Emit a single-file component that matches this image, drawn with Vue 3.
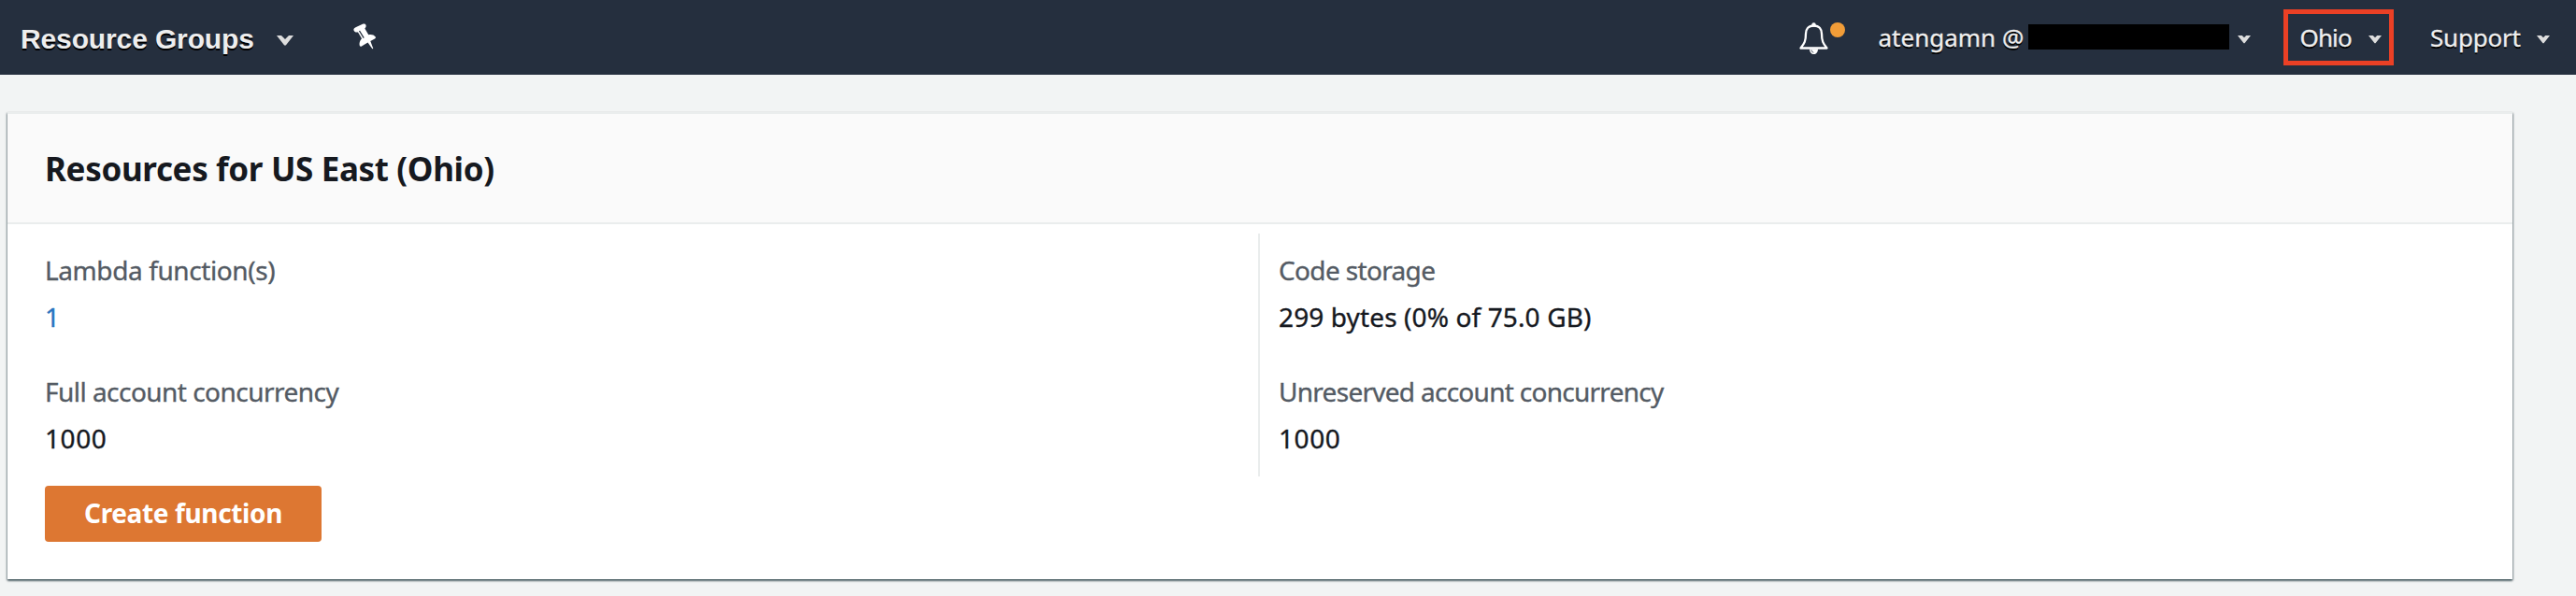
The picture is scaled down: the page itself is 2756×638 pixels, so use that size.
<script setup>
const left = [
  { label: 'Lambda function(s)', value: '1', link: true, fit: 'fit-lambda' },
  { label: 'Full account concurrency', value: '1000', fit: 'fit-full' },
]
const right = [
  { label: 'Code storage', value: '299 bytes (0% of 75.0 GB)', long: true, fit: 'fit-code' },
  { label: 'Unreserved account concurrency', value: '1000', fit: 'fit-unreserved' },
]
</script>

<template>
  <div class="page">
    <header class="nav">
      <div class="groups">Resource Groups</div>
      <svg class="caret-lg" width="18" height="11" viewBox="0 0 18 11"><path d="M0 0H5L9 4L13 0H18L9.8 10.4H8.2Z" /></svg>
      <svg class="pin" width="26" height="30" viewBox="0 0 26 30">
        <path fill="#fff" d="M.5 7.500C0 6 1 5 3 4L10 .8C11.500 .2 13 .6 13.500 2C14 3.300 13.300 4.500 12.300 5.500L16.300 12.200C19 11.500 22 12 23.800 14.500C24.200 15.500 23.800 16.200 22.500 16.800L18.300 19L21.300 27L20.300 27.200L15.500 20.500L10.500 23.500C8.500 25 7.500 25.300 6.800 24C6 21.500 7 18.500 9 16.300L5 9.500C2.500 9.900 1 9 .5 7.500Z" />
        <path fill="none" stroke="#252f3e" stroke-width="1.300" d="M6.500 8L11.200 15.600" />
      </svg>
      <div class="spacer"></div>
      <svg class="bell" width="34" height="36" viewBox="0 0 34 36">
        <circle cx="16.500" cy="2.500" r="2.200" fill="#fff" />
        <path fill="none" stroke="#fff" stroke-width="2.300" stroke-linejoin="round" d="M16.500 3.500C10.500 3.500 8 7.500 8 12C8 20 6.500 22.500 2.500 27.500H30.500C26.500 22.500 25 20 25 12C25 7.500 22.500 3.500 16.500 3.500Z" />
        <path fill="#fff" d="M12 28.500H21C21 32 19 34 16.500 34S12 32 12 28.500Z" />
        <path fill="none" stroke="#252f3e" stroke-width=".8" d="M13.800 29.500Q14.200 31.700 16.300 32.300" />
      </svg>
      <span class="dot"></span>
      <span class="user">atengamn @</span>
      <span class="redacted"></span>
      <svg class="caret user-caret" width="14" height="9" viewBox="0 0 14 9"><path d="M0 0H4.800L7 2.200L9.200 0H14L7.500 8.300H6.500Z" /></svg>
      <div class="region">
        <span class="ohio">Ohio</span>
        <svg class="caret" width="14" height="9" viewBox="0 0 14 9"><path d="M0 0H4.800L7 2.200L9.200 0H14L7.500 8.300H6.500Z" /></svg>
      </div>
      <span class="support">Support</span>
      <svg class="caret" width="14" height="9" viewBox="0 0 14 9"><path d="M0 0H4.800L7 2.200L9.200 0H14L7.500 8.300H6.500Z" /></svg>
    </header>

    <main class="card">
      <h2 class="title">Resources for US East (Ohio)</h2>
      <div class="columns">
        <section class="col">
          <div v-for="item in left" :key="item.label" class="item">
            <div class="label" :class="item.fit">{{ item.label }}</div>
            <div class="value" :class="{ link: item.link, digits: !item.long }">{{ item.value }}</div>
          </div>
        </section>
        <section class="col second">
          <div v-for="item in right" :key="item.label" class="item">
            <div class="label" :class="item.fit">{{ item.label }}</div>
            <div class="value" :class="item.long ? 'bytes' : 'digits'">{{ item.value }}</div>
          </div>
        </section>
      </div>
      <button class="create">Create function</button>
    </main>
  </div>
</template>

<style>
body { margin: 0; background: #f2f4f4; }
</style>

<style scoped>
.page {
  width: 2756px;
  height: 638px;
  overflow: hidden;
  box-sizing: border-box;
  background: #f2f4f4;
  font-family: "Noto Sans", "Open Sans", sans-serif;
}
.nav {
  display: flex;
  align-items: center;
  height: 80px;
  box-sizing: border-box;
  padding: 0 28px 0 22px;
  background: #252f3e;
  color: #eee;
  font-size: 26px;
  line-height: 40px;
  white-space: nowrap;
  text-shadow: 0 2px 0 #000;
}
.nav > * { flex: none; }
.nav > .spacer { flex: 1; }
.groups {
  width: 274px;
  padding-top: 4px;
  font: bold 30px/40px "Liberation Sans", Arial, sans-serif;
  letter-spacing: -.13px;
}
.caret, .caret-lg { fill: #ddd; display: block; flex: none; }
.caret { margin-top: 5px; }
.caret-lg { margin-top: 6px; }
.pin { margin-left: 63.500px; }
.bell { margin-top: 3px; }
.dot {
  width: 16px;
  height: 16px;
  margin: -16px 35.500px 0 0;
  border-radius: 50%;
  background: #f29d38;
}
.user { width: 160.500px; }
.user, .ohio, .support { -webkit-text-stroke: .3px currentColor; }
.redacted { width: 214.500px; height: 27px; background: #000; margin-top: -2px; }
.user-caret { margin-left: 9.500px; }
.region {
  display: flex;
  align-items: center;
  box-sizing: border-box;
  width: 118px;
  height: 60px;
  margin: 0 39px 0 35px;
  padding-left: 12.500px;
  border: 5px solid #eb4025;
}
.ohio { width: 73.500px; letter-spacing: -.9px; }
.support { width: 114px; letter-spacing: -.2px; }
.card {
  box-sizing: border-box;
  width: 2680px;
  height: 500px;
  margin: 40px 0 0 8px;
  border-top: 2px solid #eaeded;
  background: #fff;
  box-shadow: 0 2px 2px 0 rgba(0, 28, 36, .5), 1px 1px 2px 0 rgba(0, 28, 36, .3), -1px 1px 2px 0 rgba(0, 28, 36, .3);
}
.title {
  height: 116px;
  margin: 0;
  padding-left: 40px;
  border-bottom: 2px solid #eaeded;
  background: #fafafa;
  color: #16191f;
  font-size: 35px;
  font-weight: 700;
  line-height: 118px;
  letter-spacing: -.35px;
}
.columns {
  display: grid;
  grid-template-columns: 1338px 1fr;
  padding-top: 10px;
}
.col {
  display: flex;
  flex-direction: column;
  gap: 30px;
  box-sizing: border-box;
  height: 260px;
  padding: 14px 0 0 40px;
  font-size: 28px;
  line-height: 50px;
  -webkit-text-stroke: .35px currentColor;
}
.second { padding-left: 20px; border-left: 2px solid #eaeded; }
.label { color: #545b64; }
.value { color: #16191f; }
.digits { letter-spacing: .6px; }
.bytes { letter-spacing: .12px; }
.link { color: #2a74c0; }
.fit-lambda { letter-spacing: -.4px; }
.fit-full { letter-spacing: -.53px; }
.fit-code { letter-spacing: -.65px; }
.fit-unreserved { letter-spacing: -.72px; }
.create {
  display: block;
  width: 296px;
  height: 60px;
  margin: 10px 0 0 40px;
  padding: 0 0 2px;
  border: 0;
  border-radius: 4px;
  background: #dd7732;
  color: #fff;
  font: bold 28px/40px "Noto Sans", "Open Sans", sans-serif;
  letter-spacing: -.37px;
}
</style>
